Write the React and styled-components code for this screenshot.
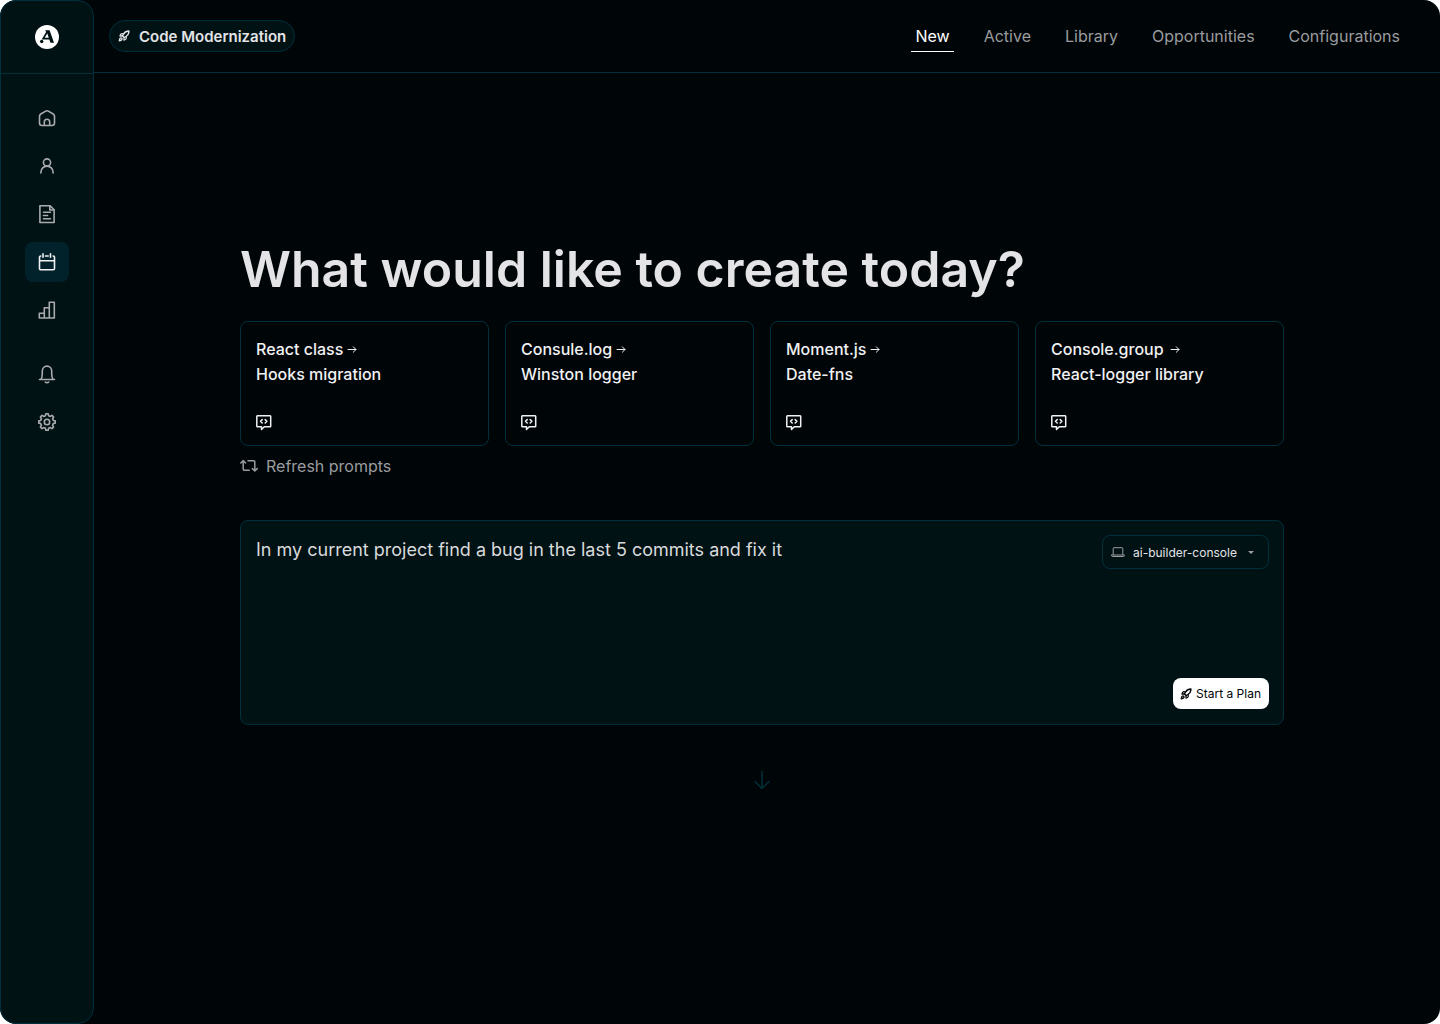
import React from 'react';
import styled, { createGlobalStyle } from 'styled-components';
import { Rocket } from 'lucide-react';

const colors = {
  bg: '#000508',
  panel: '#011215',
  line: '#00303b',
  active: '#02222b',
  text: '#e4e4e7',
  muted: '#9a9c9f',
  icon: '#a9abae',
};

const GlobalStyle = createGlobalStyle`
  * {
    box-sizing: border-box;
  }

  body {
    margin: 0;
    background: #fff;
    font-family: Inter, 'Liberation Sans', sans-serif;
    color: ${colors.text};
  }

  button, select, textarea {
    font-family: inherit;
  }
`;

// ---------- Icons ----------

const Icon = ({ size = 20, width = 1.6, children }) => (
  <svg
    width={size}
    height={size}
    viewBox={`0 0 ${size} ${size}`}
    fill="none"
    stroke="currentColor"
    strokeWidth={width}
    strokeLinecap="round"
    strokeLinejoin="round"
    aria-hidden="true"
  >
    {children}
  </svg>
);

const LogoMark = () => (
  <svg width="24" height="24" viewBox="0 0 24 24" aria-hidden="true">
    <circle cx="12" cy="12" r="12" fill="#fff" />
    <path d="M10 5.2h4.600L19 17.800h-3.500L12.200 8.200z" fill={colors.panel} />
    <path d="M12 7.200 8.200 13.600h6.600" fill="none" stroke={colors.panel} strokeWidth="1.7" />
    <circle cx="6.700" cy="16.500" r="1.700" fill={colors.panel} />
  </svg>
);

const HomeIcon = () => (
  <Icon>
    <path d="M5 17.5A2.5 2.5 0 0 1 2.5 15V8.2A2.6 2.6 0 0 1 3.8 6l4.9-2.9a2.6 2.6 0 0 1 2.6 0L16.2 6a2.6 2.6 0 0 1 1.3 2.2V15a2.5 2.5 0 0 1-2.5 2.5z" />
    <path d="M7.3 17.3V14a2.7 2.7 0 0 1 5.4 0v3.3" />
  </Icon>
);

const UserIcon = () => (
  <Icon>
    <circle cx="10" cy="6.5" r="3.6" />
    <path d="M3.9 17v-.8a6.1 6.1 0 0 1 12.2 0v.8" />
  </Icon>
);

const FileIcon = () => (
  <Icon>
    <path d="M2.9 1.8h10.2l4 4v12.7H2.9z" />
    <path d="M12.8 1.8v4.2h4M6.5 8.3h7M6.5 11.5h4M6.5 14.8h7" />
  </Icon>
);

const CalendarIcon = () => (
  <Icon>
    <path d="M3.8 4a1.3 1.3 0 0 0-1.3 1.3v11.2a1.3 1.3 0 0 0 1.3 1.3h12.4a1.3 1.3 0 0 0 1.3-1.3V5.3A1.3 1.3 0 0 0 16.2 4M8.4 4h2.8M2.5 8.7h15M6 1.8v3.4M13.5 1.8v3.4" />
  </Icon>
);

const ChartIcon = () => (
  <Icon>
    <path d="M2.3 13.2h5V18h-5zM7.3 18V7.7h5V18zM12.3 18V2.3h5V18z" />
  </Icon>
);

const BellIcon = () => (
  <Icon>
    <path d="M2.5 15.500h15M4 15.200c1.100-1.600 1.300-3.200 1.300-5.700V7a4.700 4.900 0 0 1 9.400 0v2.500c0 2.500.200 4.100 1.300 5.700M8.300 18a2.400 2.400 0 0 0 3.400 0" />
  </Icon>
);

// gear outline: eight rounded teeth around the hub
const gearPath = Array.from({ length: 8 }, (_, i) => {
  const at = (deg, r) => {
    const a = ((i * 45 + deg) * Math.PI) / 180;
    return `${10 + r * Math.sin(a)} ${10 - r * Math.cos(a)}`;
  };
  return `${i ? 'L' : 'M'}${at(-14, 6.5)}L${at(-8, 8.3)}L${at(8, 8.3)}L${at(14, 6.5)}`;
}).join('');

const GearIcon = () => (
  <Icon>
    <path d={`${gearPath}Z`} />
    <circle cx="10" cy="10" r="2.7" />
  </Icon>
);

const CodeChatIcon = () => (
  <Icon size={16} width={1.5}>
    <path d="M1.3.8h12.900a.500.500 0 0 1 .500.500v10a.500.500 0 0 1-.500.500H8.300l-2.800 2.700v-2.700H1.300a.500.500 0 0 1-.500-.500v-10a.500.500 0 0 1 .500-.500z" />
    <path d="M6.200 4.600 4.500 6.300 6.200 8M9.200 4.600l1.700 1.700L9.200 8" />
  </Icon>
);

const RepeatIcon = () => (
  <Icon size={18} width={1.5}>
    <path d="M.8 6l2.400-2.400L5.600 6M3.200 4v8a1.200 1.200 0 0 0 1.200 1.200h4.800" />
    <path d="M12.400 11.600l2.400 2.400 2.400-2.400M14.800 13.600V5a1.200 1.200 0 0 0-1.200-1.200H8" />
  </Icon>
);

const LaptopIcon = () => (
  <Icon size={14} width={1}>
    <path d="M2.200 9.500v-6a.8.8 0 0 1 .8-.8h8a.8.8 0 0 1 .8.8v6M.6 10h12.800v.5a1 1 0 0 1-1 1H1.600a1 1 0 0 1-1-1z" />
  </Icon>
);

const ArrowRight = () => (
  <Icon size={10} width={1}>
    <path d="M1 4.500h8M6.300 1.800 9 4.500 6.300 7.200" />
  </Icon>
);

const ArrowDown = () => (
  <Icon width={1.5}>
    <path d="M10 1.500v17M3 11.500l7 7 7-7" />
  </Icon>
);

// ---------- Layout ----------

const Page = styled.div`
  display: flex;
  min-height: 100vh;
  background: ${colors.bg};
  border-radius: 16px;
  overflow: hidden;
`;

const Sidebar = styled.aside`
  flex: 0 0 94px;
  background: ${colors.panel};
  border: 1px solid ${colors.line};
  border-radius: 16px;
`;

const Brand = styled.a`
  display: flex;
  align-items: center;
  justify-content: center;
  height: 73px;
  border-bottom: 1px solid ${colors.line};
`;

const SideNav = styled.nav`
  display: flex;
  flex-direction: column;
  align-items: center;
  gap: 24px;
  padding-top: 24px;
`;

const SideGroup = styled.div`
  display: flex;
  flex-direction: column;
  gap: 8px;
`;

const SideLink = styled.a`
  display: flex;
  align-items: center;
  justify-content: center;
  width: 44px;
  height: 40px;
  border-radius: 8px;
  color: ${({ $active }) => ($active ? '#f1f1f3' : colors.icon)};
  background: ${({ $active }) => ($active ? colors.active : 'transparent')};
`;

const Main = styled.main`
  flex: 1;
  min-width: 0;
`;

const TopBar = styled.header`
  display: flex;
  align-items: center;
  justify-content: space-between;
  height: 73px;
  padding: 0 36px 0 15px;
  border-bottom: 1px solid ${colors.line};
`;

const ModeButton = styled.button`
  display: flex;
  align-items: center;
  gap: 9px;
  height: 32px;
  padding: 0 8px;
  border: 1px solid ${colors.line};
  border-radius: 16px;
  background: ${colors.panel};
  color: ${colors.text};
  font-size: 15px;
  font-weight: 600;
`;

const Tabs = styled.nav`
  display: flex;
  gap: 26px;
`;

const Tab = styled.a`
  padding: 0 4px;
  border-bottom: 1px solid ${({ $active }) => ($active ? '#fff' : 'transparent')};
  color: ${({ $active }) => ($active ? '#fff' : colors.muted)};
  font-size: 16px;
  line-height: 30px;
  text-decoration: none;
`;

const Content = styled.section`
  padding: 164px 156px 48px 146px;
`;

const Title = styled.h1`
  margin: 0 0 20px;
  font-size: 50px;
  font-weight: 600;
  line-height: 64px;
`;

const Cards = styled.div`
  display: grid;
  grid-template-columns: repeat(4, 1fr);
  gap: 16px;
`;

const Card = styled.button`
  display: flex;
  flex-direction: column;
  justify-content: space-between;
  height: 125px;
  padding: 15px 15px 14px;
  border: 1px solid ${colors.line};
  border-radius: 8px;
  background: transparent;
  color: #f1f1f3;
  font-size: 16px;
  font-weight: 500;
  line-height: 25px;
  text-align: left;

  > svg {
    display: block;
  }
`;

const CardLine = styled.span`
  display: flex;
  align-items: center;
  gap: ${({ $gap = 4 }) => $gap}px;
`;

const RefreshButton = styled.button`
  display: flex;
  align-items: center;
  gap: 8px;
  margin-top: 8px;
  padding: 0;
  border: 0;
  background: none;
  color: ${colors.muted};
  font-size: 16px;
  line-height: 24px;
`;

const PromptBox = styled.form`
  display: flex;
  gap: 16px;
  min-height: 205px;
  margin-top: 42px;
  padding: 14px 14px 15px 15px;
  border: 1px solid ${colors.line};
  border-radius: 8px;
  background: ${colors.panel};
`;

const PromptInput = styled.textarea`
  flex: 1;
  min-width: 0;
  padding: 0;
  border: 0;
  outline: 0;
  resize: none;
  background: none;
  color: #d9dadc;
  font-size: 18px;
  line-height: 30px;
`;

const PromptSide = styled.div`
  display: flex;
  flex-direction: column;
  align-items: flex-end;
  justify-content: space-between;
`;

const RepoPicker = styled.label`
  display: flex;
  align-items: center;
  gap: 8px;
  height: 34px;
  padding: 0 14px 0 8px;
  border: 1px solid ${colors.line};
  border-radius: 8px;
  color: ${colors.muted};
`;

const RepoSelect = styled.select`
  appearance: none;
  width: 107px;
  padding: 0;
  border: 0;
  outline: 0;
  background: none;
  color: ${colors.text};
  font-size: 12px;
`;

const Caret = styled.span`
  border: 3px solid transparent;
  border-top-color: currentColor;
  border-bottom: 0;
`;

const StartButton = styled.button`
  display: flex;
  align-items: center;
  gap: 4px;
  height: 31px;
  padding: 0 8px 0 7px;
  border: 0;
  border-radius: 8px;
  background: #fff;
  color: ${colors.bg};
  font-size: 12px;
`;

const More = styled.div`
  display: flex;
  justify-content: center;
  margin-top: 45px;
  color: ${colors.line};
`;

// ---------- Data ----------

const mainLinks = [
  { label: 'Home', icon: HomeIcon },
  { label: 'Profile', icon: UserIcon },
  { label: 'Documents', icon: FileIcon },
  { label: 'Calendar', icon: CalendarIcon, active: true },
  { label: 'Reports', icon: ChartIcon },
];

const extraLinks = [
  { label: 'Notifications', icon: BellIcon },
  { label: 'Settings', icon: GearIcon },
];

const tabs = ['New', 'Active', 'Library', 'Opportunities', 'Configurations'];

const prompts = [
  { from: 'React class', to: 'Hooks migration' },
  { from: 'Consule.log', to: 'Winston logger' },
  { from: 'Moment.js', to: 'Date-fns' },
  { from: 'Console.group', to: 'React-logger library', gap: 6 },
];

const SideLinks = ({ links }) => (
  <SideGroup>
    {links.map(({ label, icon: LinkIcon, active }) => (
      <SideLink key={label} href="#" aria-label={label} $active={active}>
        <LinkIcon />
      </SideLink>
    ))}
  </SideGroup>
);

const App = () => {
  return (
    <>
      <GlobalStyle />
      <Page>
        <Sidebar>
          <Brand href="#" aria-label="Dashboard">
            <LogoMark />
          </Brand>
          <SideNav>
            <SideLinks links={mainLinks} />
            <SideLinks links={extraLinks} />
          </SideNav>
        </Sidebar>

        <Main>
          <TopBar>
            <ModeButton type="button">
              <Rocket size={12} strokeWidth={2.6} />
              Code Modernization
            </ModeButton>
            <Tabs>
              {tabs.map((tab) => (
                <Tab key={tab} href="#" $active={tab === 'New'}>
                  {tab}
                </Tab>
              ))}
            </Tabs>
          </TopBar>

          <Content>
            <Title>What would like to create today?</Title>
            <Cards>
              {prompts.map(({ from, to, gap }) => (
                <Card key={from} type="button">
                  <span>
                    <CardLine $gap={gap}>
                      {from}
                      <ArrowRight />
                    </CardLine>
                    <CardLine>{to}</CardLine>
                  </span>
                  <CodeChatIcon />
                </Card>
              ))}
            </Cards>
            <RefreshButton type="button">
              <RepeatIcon />
              Refresh prompts
            </RefreshButton>

            <PromptBox onSubmit={(e) => e.preventDefault()}>
              <PromptInput
                aria-label="Prompt"
                defaultValue="In my current project find a bug in the last 5 commits and fix it"
              />
              <PromptSide>
                <RepoPicker>
                  <LaptopIcon />
                  <RepoSelect aria-label="Repository">
                    <option>ai-builder-console</option>
                  </RepoSelect>
                  <Caret />
                </RepoPicker>
                <StartButton type="submit">
                  <Rocket size={12} strokeWidth={2.6} />
                  Start a Plan
                </StartButton>
              </PromptSide>
            </PromptBox>

            <More>
              <ArrowDown />
            </More>
          </Content>
        </Main>
      </Page>
    </>
  );
};

export default App;
